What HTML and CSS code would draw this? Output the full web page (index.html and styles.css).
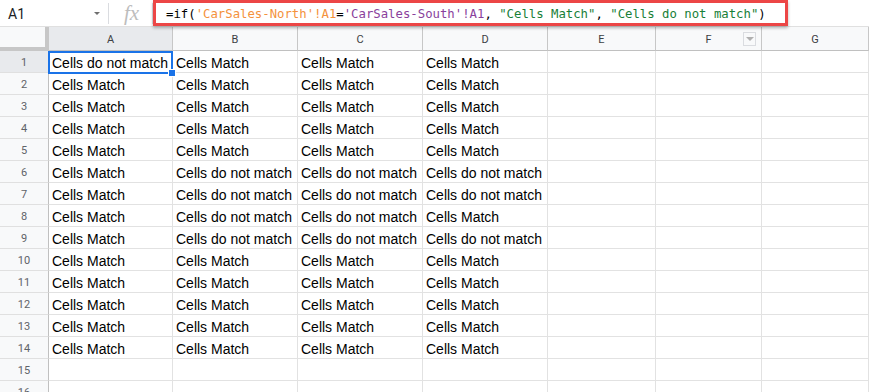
FILE: index.html
```html
<!DOCTYPE html>
<html>
<head>
<meta charset="utf-8">
<link rel="stylesheet" href="styles.css">
</head>
<body>
<div class="topbar">
  <div class="namebox"><span class="nb-text">A1</span><span class="nb-arrow"></span></div>
  <div class="sep"></div>
  <div class="fx">fx</div>
  <div class="sep"></div>
  <div class="formula"><span class="k">=if(</span><span class="o">'CarSales-North'!A1</span><span class="k">=</span><span class="p">'CarSales-South'!A1</span><span class="k">, </span><span class="g">"Cells Match"</span><span class="k">, </span><span class="g">"Cells do not match"</span><span class="k">)</span></div>
</div>
<div class="sheet">
  <div class="corner"></div>
  <div class="ch sel">A</div><div class="ch">B</div><div class="ch">C</div><div class="ch">D</div><div class="ch">E</div><div class="ch">F<span class="filter"></span></div><div class="ch">G</div>

  <div class="rh sel">1</div><div class="c">Cells do not match</div><div class="c">Cells Match</div><div class="c">Cells Match</div><div class="c">Cells Match</div><div class="c"></div><div class="c"></div><div class="c"></div>
  <div class="rh">2</div><div class="c">Cells Match</div><div class="c">Cells Match</div><div class="c">Cells Match</div><div class="c">Cells Match</div><div class="c"></div><div class="c"></div><div class="c"></div>
  <div class="rh">3</div><div class="c">Cells Match</div><div class="c">Cells Match</div><div class="c">Cells Match</div><div class="c">Cells Match</div><div class="c"></div><div class="c"></div><div class="c"></div>
  <div class="rh">4</div><div class="c">Cells Match</div><div class="c">Cells Match</div><div class="c">Cells Match</div><div class="c">Cells Match</div><div class="c"></div><div class="c"></div><div class="c"></div>
  <div class="rh">5</div><div class="c">Cells Match</div><div class="c">Cells Match</div><div class="c">Cells Match</div><div class="c">Cells Match</div><div class="c"></div><div class="c"></div><div class="c"></div>
  <div class="rh">6</div><div class="c">Cells Match</div><div class="c">Cells do not match</div><div class="c">Cells do not match</div><div class="c">Cells do not match</div><div class="c"></div><div class="c"></div><div class="c"></div>
  <div class="rh">7</div><div class="c">Cells Match</div><div class="c">Cells do not match</div><div class="c">Cells do not match</div><div class="c">Cells do not match</div><div class="c"></div><div class="c"></div><div class="c"></div>
  <div class="rh">8</div><div class="c">Cells Match</div><div class="c">Cells do not match</div><div class="c">Cells do not match</div><div class="c">Cells Match</div><div class="c"></div><div class="c"></div><div class="c"></div>
  <div class="rh">9</div><div class="c">Cells Match</div><div class="c">Cells do not match</div><div class="c">Cells do not match</div><div class="c">Cells do not match</div><div class="c"></div><div class="c"></div><div class="c"></div>
  <div class="rh">10</div><div class="c">Cells Match</div><div class="c">Cells Match</div><div class="c">Cells Match</div><div class="c">Cells Match</div><div class="c"></div><div class="c"></div><div class="c"></div>
  <div class="rh">11</div><div class="c">Cells Match</div><div class="c">Cells Match</div><div class="c">Cells Match</div><div class="c">Cells Match</div><div class="c"></div><div class="c"></div><div class="c"></div>
  <div class="rh">12</div><div class="c">Cells Match</div><div class="c">Cells Match</div><div class="c">Cells Match</div><div class="c">Cells Match</div><div class="c"></div><div class="c"></div><div class="c"></div>
  <div class="rh">13</div><div class="c">Cells Match</div><div class="c">Cells Match</div><div class="c">Cells Match</div><div class="c">Cells Match</div><div class="c"></div><div class="c"></div><div class="c"></div>
  <div class="rh">14</div><div class="c">Cells Match</div><div class="c">Cells Match</div><div class="c">Cells Match</div><div class="c">Cells Match</div><div class="c"></div><div class="c"></div><div class="c"></div>
  <div class="rh">15</div><div class="c"></div><div class="c"></div><div class="c"></div><div class="c"></div><div class="c"></div><div class="c"></div><div class="c"></div>
  <div class="rh">16</div><div class="c"></div><div class="c"></div><div class="c"></div><div class="c"></div><div class="c"></div><div class="c"></div><div class="c"></div>

  <div class="selection"><span class="handle"></span></div>
</div>
</body>
</html>
```
FILE: styles.css
```css
* { box-sizing: border-box; }
html, body { margin: 0; padding: 0; }
body {
  width: 869px;
  height: 392px;
  overflow: hidden;
  background: #fff;
  font-family: "Liberation Sans", Arial, sans-serif;
}
.topbar {
  height: 27px;
  display: flex;
  align-items: flex-start;
  border-bottom: 1px solid #e0e0e0;
  background: #fff;
}
.namebox {
  width: 108px;
  height: 26px;
  display: flex;
  align-items: center;
  padding-left: 8px;
  padding-top: 1px;
  position: relative;
}
.nb-text {
  font-family: Roboto, "Liberation Sans", sans-serif;
  font-size: 14px;
  color: #202124;
}
.nb-arrow {
  margin-left: auto;
  margin-right: 8px;
  width: 0; height: 0;
  border-left: 3px solid transparent;
  border-right: 3px solid transparent;
  border-top: 3px solid #6f6f6f;
}
.sep {
  width: 1px;
  height: 21px;
  margin-top: 3px;
  background: #dadce0;
}
.fx {
  width: 43px;
  height: 26px;
  display: flex;
  align-items: center;
  justify-content: center;
  font-family: "Liberation Serif", "Times New Roman", serif;
  font-style: italic;
  font-size: 21px;
  color: #bdbdbd;
  padding-left: 2px;
}
.formula {
  width: 635px;
  height: 26px;
  border: 3px solid #ec4646;
  box-shadow: 0 2px 3px rgba(0,0,0,0.28);
  padding-left: 10px;
  padding-top: 2px;
  display: flex;
  align-items: center;
  font-family: "DejaVu Sans Mono", "Liberation Mono", monospace;
  font-size: 12.3px;
  white-space: pre;
  position: relative;
  z-index: 2;
  background: #fff;
}
.k { color: #000; }
.o { color: #f4923c; }
.p { color: #8a3f9c; }
.g { color: #188038; }

.sheet {
  display: grid;
  grid-template-columns: 49px 124px 125px 125px 125px 108px 106px 107px;
  grid-template-rows: 24px repeat(16, 22px);
  position: relative;
}
.corner {
  background: #f8f9fa;
  border-right: 4px solid #c7c7c7;
  border-bottom: 4px solid #c7c7c7;
}
.ch {
  background: #f8f9fa;
  border-right: 1px solid #c7c7c7;
  border-bottom: 1px solid #c0c0c0;
  display: flex;
  align-items: center;
  justify-content: center;
  font-family: Roboto, "Liberation Sans", sans-serif;
  font-size: 11px;
  color: #3c4043;
  position: relative;
  padding-top: 1px;
}
.ch.sel, .rh.sel { background: #e8eaed; }
.rh {
  background: #f8f9fa;
  border-right: 1px solid #c0c0c0;
  border-bottom: 1px solid #e0e0e0;
  display: flex;
  align-items: center;
  justify-content: center;
  font-family: Roboto, "Liberation Sans", sans-serif;
  font-size: 11px;
  color: #5f6368;
  padding-top: 1px;
}
.c {
  border-right: 1px solid #e2e2e2;
  border-bottom: 1px solid #e2e2e2;
  font-size: 14px;
  line-height: 20px;
  padding-top: 2px;
  padding-left: 3px;
  color: #000;
  white-space: nowrap;
  overflow: hidden;
}
.filter {
  position: absolute;
  right: 5px;
  top: 5px;
  width: 13px;
  height: 14px;
  border: 1px solid #dadce0;
  background: #f8f9fa;
  display: flex;
  align-items: center;
  justify-content: center;
}
.filter::after {
  content: "";
  width: 0; height: 0;
  border-left: 4px solid transparent;
  border-right: 4px solid transparent;
  border-top: 4px solid #b0b0b0;
}
.selection {
  position: absolute;
  left: 48px;
  top: 24px;
  width: 125px;
  height: 23px;
  border: 2px solid #1a73e8;
  pointer-events: none;
}
.handle {
  position: absolute;
  right: -5px;
  bottom: -5px;
  width: 8px;
  height: 8px;
  background: #1a73e8;
  border: 1px solid #fff;
}
```
